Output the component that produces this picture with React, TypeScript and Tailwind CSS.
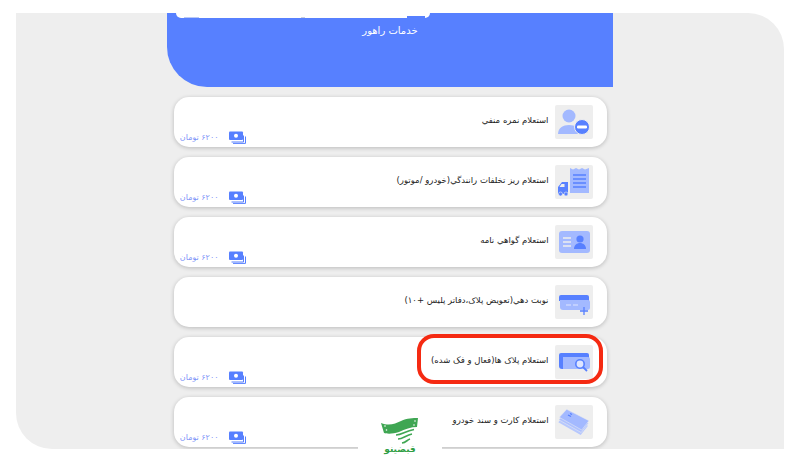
import type { ReactNode } from "react";

const tileBlue = "#5780ff";
const lightBlue = "#a3b9ff";

const NegativeIcon = () => (
  <svg viewBox="0 0 38 34" className="h-[34px] w-[38px]">
    <circle cx="14" cy="11" r="6.5" fill={lightBlue} />
    <path d="M3 29c0-6 5-9 11-9s11 3 11 9z" fill={lightBlue} />
    <circle cx="27" cy="22" r="7.5" fill={tileBlue} stroke="#eeeeee" strokeWidth="1" />
    <rect x="22" y="20.5" width="10" height="3" rx="1.2" fill="#ffffff" />
  </svg>
);

const ReceiptIcon = () => (
  <svg viewBox="0 0 38 34" className="h-[34px] w-[38px]">
    <path d="M15 3l3 1.5L21 3l3 1.5L27 3l3 1.5L34 3v25H15z" fill={lightBlue} />
    <path d="M18 10h13M18 14h13M18 18h13M18 22h13" stroke={tileBlue} strokeWidth="1.3" />
    <path d="M7 17h6v12H3v-7z" fill={tileBlue} />
    <path d="M6.5 19h3v3h-5z" fill="#eeeeee" />
    <circle cx="5.5" cy="29" r="2" fill={tileBlue} stroke="#eeeeee" strokeWidth="0.6" />
    <circle cx="11" cy="29" r="2" fill={tileBlue} stroke="#eeeeee" strokeWidth="0.6" />
  </svg>
);

const LicenseIcon = () => (
  <svg viewBox="0 0 38 34" className="h-[34px] w-[38px]">
    <rect x="4" y="6" width="31" height="22" rx="3" fill={lightBlue} />
    <path d="M8 13h8M8 17h8M8 21h8" stroke="#eeeeee" strokeWidth="1.4" />
    <circle cx="25" cy="14" r="3.6" fill={tileBlue} />
    <path d="M19 24c0-4 3-6 6-6s6 2 6 6z" fill={tileBlue} />
  </svg>
);

const PlateAddIcon = () => (
  <svg viewBox="0 0 38 34" className="h-[34px] w-[38px]">
    <path d="M4 12a2 2 0 0 1 2-2h26a2 2 0 0 1 2 2v4H4z" fill={tileBlue} />
    <path d="M5 15h28a2 2 0 0 1 2 2v6a2 2 0 0 1-2 2H8a3 3 0 0 1-3-3z" fill={lightBlue} />
    <path d="M11 20h5M18 20h5" stroke="#dfe6ff" strokeWidth="1.2" />
    <path d="M29 22v8M25 26h8" stroke={tileBlue} strokeWidth="1.3" />
  </svg>
);

const PlateSearchIcon = () => (
  <svg viewBox="0 0 38 34" className="h-[34px] w-[38px]">
    <path d="M4 10a2 2 0 0 1 2-2h26a2 2 0 0 1 2 2v3H4z" fill={tileBlue} />
    <path d="M4 10h4v14H7a3 3 0 0 1-3-3z" fill={tileBlue} />
    <path d="M8 12h25a2 2 0 0 1 2 2v8a2 2 0 0 1-2 2H8z" fill={lightBlue} />
    <circle cx="25" cy="19" r="4.2" fill="#dfe6ff" stroke={tileBlue} strokeWidth="1.6" />
    <path d="M28 22l4 4" stroke={tileBlue} strokeWidth="1.8" />
  </svg>
);

const CardsIcon = () => (
  <svg viewBox="0 0 38 34" className="h-[34px] w-[38px]">
    <path d="M10.700 9.300L33 20.700 25.700 30 3.300 17.300z" fill="#b7c8fd" />
    <path d="M11.200 6.800L33.500 18.200 26.200 27.500 3.800 14.800z" fill="#aec1fe" stroke="#eeeeee" strokeWidth="0.5" />
    <path d="M11.700 4.300L34 15.700 26.700 25 4.300 12.300z" fill="#a3b9ff" stroke="#eeeeee" strokeWidth="0.5" />
    <path d="M13 10l3 1.500M15 8.500l2 1" stroke={tileBlue} strokeWidth="1.300" />
  </svg>
);

const MoneyIcon = () => (
  <svg viewBox="0 0 18 13" className="h-[13px] w-[18px]">
    <rect x="0" y="0.5" width="14" height="8.5" rx="1" fill={tileBlue} />
    <circle cx="7" cy="4.7" r="2" fill="#ffffff" />
    <path d="M2.5 11h12V4.5M4 12.4h12.5V5.5" fill="none" stroke={tileBlue} strokeWidth="1" />
  </svg>
);

const GhabzinoLogo = () => (
  <svg viewBox="0 0 38 27" className="h-[27px] w-[38px]">
    <path d="M0 5C8 8 14 6 20 3 26 0 32 0 37 0L36 9C30 9 24 11 18 14 12 16 6 16 3 15z" fill="#3fa653" />
    <circle cx="4" cy="8" r="0.8" fill="#ffffff" />
    <circle cx="5.500" cy="12" r="0.8" fill="#ffffff" />
    <circle cx="34" cy="3" r="0.8" fill="#ffffff" />
    <circle cx="33" cy="7" r="0.8" fill="#ffffff" />
    <path d="M15 17c6 0 9-4 18-5.500M17 21c5 0 8-4 14-5M21 25c4-.5 5-3 8-4" fill="none" stroke="#3fa653" strokeWidth="1.6" />
  </svg>
);

type Service = {
  title: string;
  icon: ReactNode;
  hasPrice: boolean;
  highlighted?: boolean;
};

const services: Service[] = [
  { title: "استعلام نمره منفي", icon: <NegativeIcon />, hasPrice: true },
  { title: "استعلام ریز تخلفات رانندگي(خودرو /موتور)", icon: <ReceiptIcon />, hasPrice: true },
  { title: "استعلام گواهي نامه", icon: <LicenseIcon />, hasPrice: true },
  { title: "نوبت دهي(تعویض پلاک،دفاتر پلیس +۱۰)", icon: <PlateAddIcon />, hasPrice: false },
  { title: "استعلام پلاک ها(فعال و فک شده)", icon: <PlateSearchIcon />, hasPrice: true, highlighted: true },
  { title: "استعلام کارت و سند خودرو", icon: <CardsIcon />, hasPrice: true },
];

const ServiceCard = ({ service }: { service: Service }) => (
  <div className="relative flex h-[50px] w-[433px] shrink-0 rounded-[15px] bg-white pr-[14px] pl-[7px] shadow-[0_1px_4px_rgba(0,0,0,0.22)]">
    {service.hasPrice && (
      <div className="flex items-center gap-[10px] self-end pb-[3px]">
        <span dir="rtl" className="w-[38px] text-[8px] leading-[12px] whitespace-nowrap text-[#7f95f8]">
          ۶۲۰۰ تومان
        </span>
        <MoneyIcon />
      </div>
    )}
    <div
      dir="rtl"
      className="flex-1 pt-4 text-right text-[8.5px] leading-[14px] font-medium whitespace-nowrap text-[#222222]"
    >
      {service.title}
    </div>
    <div className="mt-2 ml-[6px] flex h-[34px] w-[38px] shrink-0 rounded-[2px] bg-[#eeeeee]">
      {service.icon}
    </div>
    {service.highlighted && (
      <div className="absolute top-[-3px] right-[4px] h-[50px] w-[186px] rounded-[17px] border-4 border-[#f52a12]" />
    )}
  </div>
);

export default function App() {
  return (
    <div className="relative flex h-[460px] w-[800px] overflow-hidden bg-white px-4 pt-[13px] pb-[11px] font-['DejaVu_Sans','Noto_Sans',sans-serif]">
      <div className="flex flex-1 flex-col overflow-hidden rounded-tr-[36px] rounded-bl-[36px] bg-[#eeeeee] pl-[151px]">
        <div className="flex h-[74px] w-[446px] shrink-0 flex-col items-center overflow-hidden rounded-bl-[40px] bg-[#5780ff]">
          <div className="ml-[9px] flex h-[5px] w-[254px] items-end justify-between self-start rounded-b-[8px] bg-white pr-[5px] pl-2">
            <span className="h-px w-[15px] bg-[#b9c8f5]" />
            <span className="h-px w-[4px] bg-[#c9cfdd]" />
            <span className="h-[2px] w-[18px] bg-[#5780ff]" />
          </div>
          <span dir="rtl" className="mt-[6px] text-[10px] leading-[14px] font-medium text-white">
            خدمات راهور
          </span>
        </div>
        <div className="mt-[10px] flex w-[446px] flex-col items-center gap-[10px]">
          {services.map((service) => (
            <ServiceCard key={service.title} service={service} />
          ))}
        </div>
      </div>
      <div className="absolute top-[417px] left-[358px] flex h-[43px] w-[84px] flex-col items-center bg-white pt-px">
        <GhabzinoLogo />
        <span dir="rtl" className="-mt-px text-[9px] leading-[11px] font-bold text-[#2f9e44]">
          قبضینو
        </span>
      </div>
    </div>
  );
}
